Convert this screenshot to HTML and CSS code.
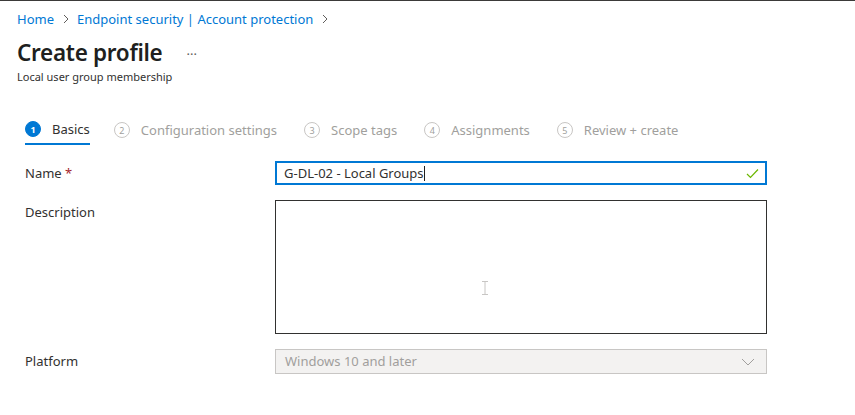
FILE: index.html
```html
<!DOCTYPE html>
<html>
<head>
<meta charset="utf-8">
<link rel="stylesheet" href="styles.css">
</head>
<body>
<div class="topline"></div>
<div class="page">
  <nav class="crumbs">
    <a class="crumb">Home</a>
    <svg class="sep" width="8" height="10" viewBox="0 0 8 10"><path d="M2 1l4 4-4 4" fill="none" stroke="#605e5c" stroke-width="1"/></svg>
    <a class="crumb">Endpoint security | Account protection</a>
    <svg class="sep" width="8" height="10" viewBox="0 0 8 10"><path d="M2 1l4 4-4 4" fill="none" stroke="#605e5c" stroke-width="1"/></svg>
  </nav>
  <div class="titlerow">
    <h1 class="title">Create profile</h1>
    <span class="more">···</span>
  </div>
  <div class="subtitle">Local user group membership</div>

  <div class="steps">
    <div class="step active">
      <span class="num">1</span><span class="label">Basics</span>
    </div>
    <div class="step">
      <span class="num">2</span><span class="label">Configuration settings</span>
    </div>
    <div class="step">
      <span class="num">3</span><span class="label">Scope tags</span>
    </div>
    <div class="step">
      <span class="num">4</span><span class="label">Assignments</span>
    </div>
    <div class="step">
      <span class="num">5</span><span class="label">Review + create</span>
    </div>
  </div>

  <div class="form">
    <div class="row">
      <div class="lbl">Name <span class="req">*</span></div>
      <div class="input">
        <span class="val">G-DL-02 - Local Groups</span><span class="caret"></span>
        <svg class="check" width="13" height="11" viewBox="0 0 13 11"><path d="M1 6l3.5 3.5L12 1.5" fill="none" stroke="#6bb700" stroke-width="1.2"/></svg>
      </div>
    </div>
    <div class="row">
      <div class="lbl">Description</div>
      <div class="textarea">
        <svg class="ibeam" width="8" height="16" viewBox="0 0 8 16"><path d="M1 1.5h6M4 1.5v13M1 14.5h6" fill="none" stroke="#c8c6c4" stroke-width="1"/></svg>
      </div>
    </div>
    <div class="row">
      <div class="lbl">Platform</div>
      <div class="select">
        <span class="selval">Windows 10 and later</span>
        <svg class="chev" width="14" height="8" viewBox="0 0 14 8"><path d="M1 1l6 6 6-6" fill="none" stroke="#a19f9d" stroke-width="1"/></svg>
      </div>
    </div>
  </div>
</div>
</body>
</html>
```
FILE: styles.css
```css
* {
  box-sizing: border-box;
}
html, body {
  margin: 0;
  padding: 0;
  background: #ffffff;
}
body {
  font-family: "Noto Sans", "Open Sans", sans-serif;
  color: #323130;
  width: 855px;
  height: 415px;
  overflow: hidden;
}
.topline {
  height: 1px;
  background: #3b3a39;
}
.page {
  padding: 0 0 0 17px;
}
.crumbs {
  display: flex;
  align-items: center;
  height: 36px;
  font-size: 13px;
}
.crumb {
  color: #0078d4;
}
.sep {
  margin: 0 7px 0 8px;
}
.titlerow {
  display: flex;
  align-items: center;
  height: 32px;
}
.title {
  margin: 0;
  font-size: 22.5px;
  font-weight: 600;
  color: #201f1e;
  letter-spacing: -0.3px;
  position: relative;
  top: -1px;
}
.more {
  margin-left: 24px;
  font-size: 13px;
  color: #605e5c;
  position: relative;
  top: 1px;
}
.subtitle {
  font-size: 11px;
  color: #323130;
  height: 16px;
}
.steps {
  display: flex;
  margin: 30px 0 0 8px;
  height: 32px;
}
.step {
  display: flex;
  align-items: center;
  height: 30px;
  margin-right: 27px;
  color: #a19f9d;
  font-size: 13px;
}
.step.active {
  color: #323130;
  border-bottom: 2px solid #0078d4;
  margin-right: 24px;
}
.num {
  width: 16px;
  height: 16px;
  border: 1px solid #c8c6c4;
  border-radius: 50%;
  display: flex;
  align-items: center;
  justify-content: center;
  font-size: 9px;
  margin-right: 11px;
  color: #a19f9d;
}
.step.active .num {
  background: #0078d4;
  border-color: #0078d4;
  color: #ffffff;
  font-weight: 700;
}
.form {
  margin: 14px 0 0 8px;
  display: flex;
  flex-direction: column;
}
.row {
  display: flex;
  margin-bottom: 15px;
}
.lbl {
  width: 250px;
  font-size: 13px;
  color: #323130;
  padding-top: 3px;
}
.req {
  color: #a4262c;
}
.input {
  width: 492px;
  height: 24px;
  border: 2px solid #0078d4;
  display: flex;
  align-items: center;
  padding-left: 7px;
  font-size: 13px;
  position: relative;
}
.val {
  color: #323130;
}
.caret {
  width: 1px;
  height: 15px;
  background: #201f1e;
}
.check {
  position: absolute;
  right: 6px;
  top: 5px;
}
.textarea {
  width: 492px;
  height: 134px;
  border: 1px solid #323130;
  position: relative;
}
.ibeam {
  position: absolute;
  left: 205px;
  top: 79px;
}
.select {
  width: 492px;
  height: 25px;
  border: 1px solid #c8c6c4;
  background: #f3f2f1;
  display: flex;
  align-items: center;
  justify-content: space-between;
  font-size: 13px;
  padding: 0 11px 0 9px;
}
.selval {
  color: #a19f9d;
  position: relative;
  top: -1px;
}
```
